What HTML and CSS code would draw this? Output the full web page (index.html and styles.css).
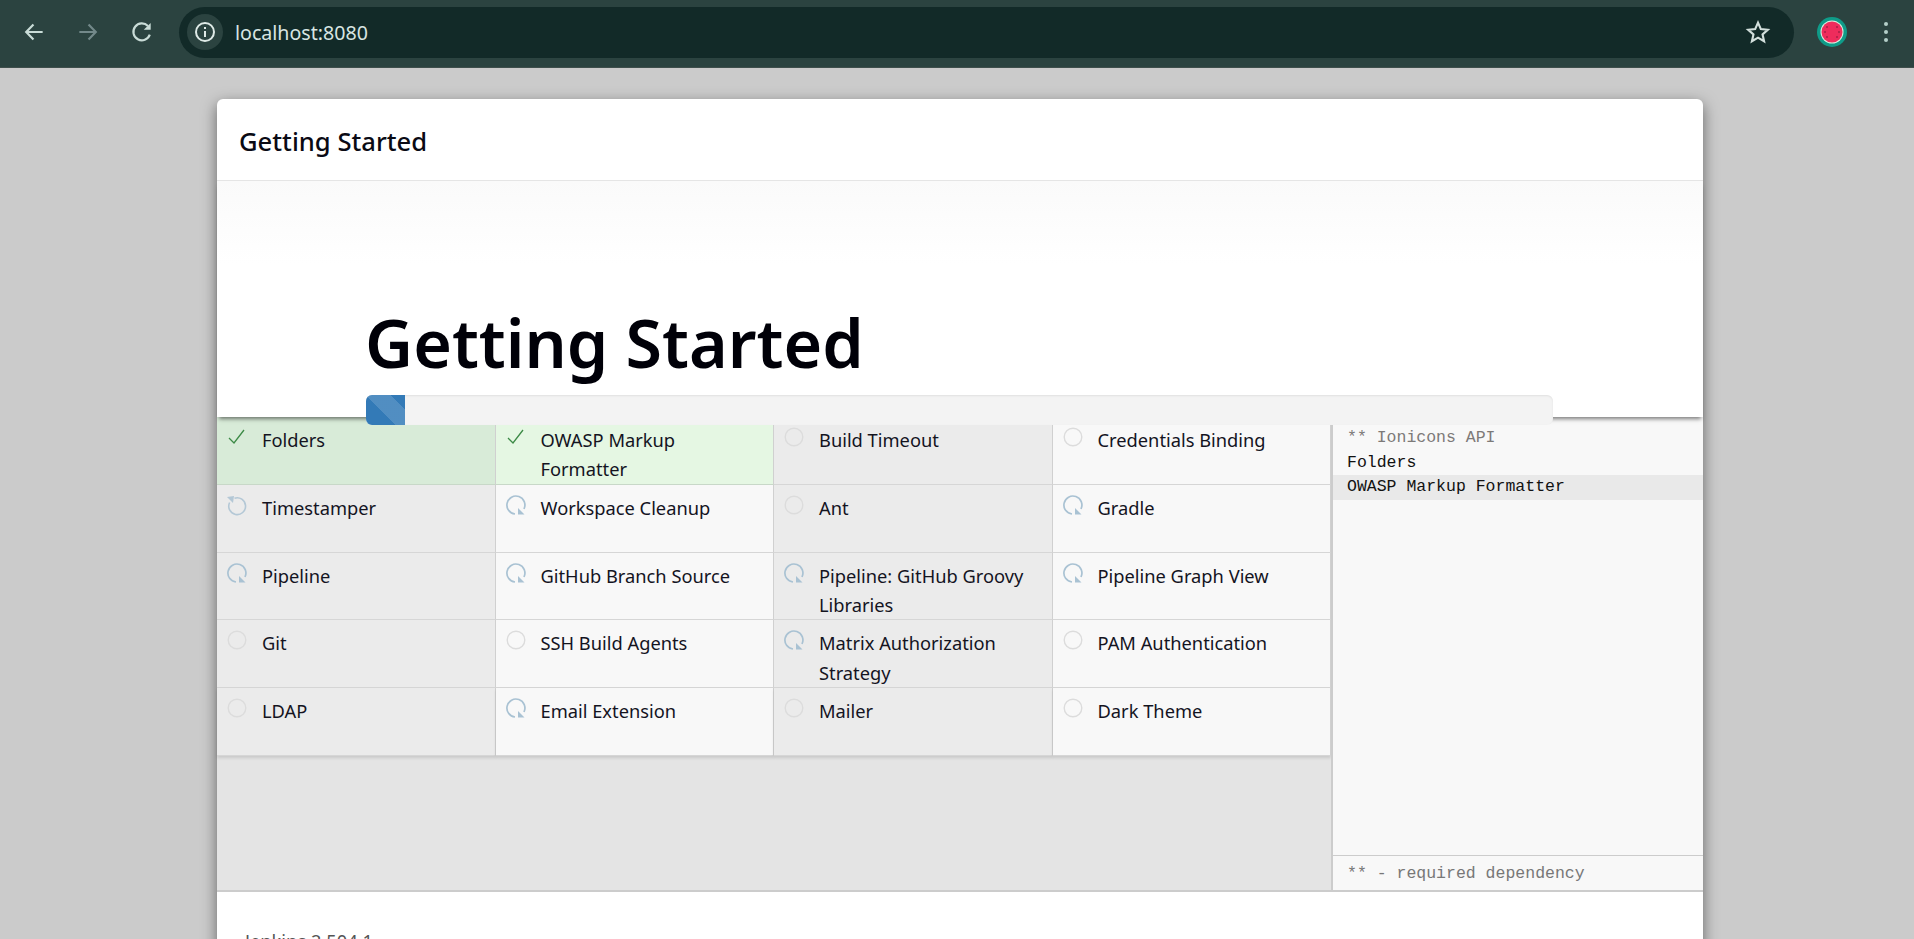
FILE: index.html
```html
<!DOCTYPE html>
<html lang="en">
<head>
    <meta charset="UTF-8">
    <title>Setup Wizard [Jenkins]</title>
    <link rel="stylesheet" href="styles.css">
</head>
<body>
    <svg class="defs" width="0" height="0">
        <symbol id="i-ok" viewBox="0 0 20 20">
            <path d="M2 11 L7 16 L17 3" fill="none" stroke="#3c8a46" stroke-width="1.3"/>
        </symbol>
        <symbol id="i-pending" viewBox="0 0 20 20">
            <circle cx="10" cy="10" r="8.8" fill="none" stroke="#dcdcdc" stroke-width="1.4"/>
        </symbol>
        <symbol id="i-load" viewBox="0 0 20 20">
            <path d="M9 19 A9 9 0 1 1 18 14" fill="none" stroke="#a9c2d3" stroke-width="1.7"/>
            <path d="M12 13 L18.5 19.5 L12 19.5 Z" fill="#a9c2d3"/>
        </symbol>
        <symbol id="i-retry" viewBox="0 0 22 22">
            <path d="M8.5 4.2 A8.4 8.4 0 1 1 3.6 8.5" fill="none" stroke="#b4c8d6" stroke-width="1.6"/>
            <path d="M1 3 L8 2 L7 9 Z" fill="#b4c8d6"/>
        </symbol>
    </svg>

    <header class="toolbar">
        <svg class="tool-icon" viewBox="0 0 24 24"><path d="M20 12H5M11.5 5L4.8 12l6.7 7" fill="none" stroke="#c9dcd7" stroke-width="2"/></svg>
        <svg class="tool-icon" viewBox="0 0 24 24"><path d="M4 12h15M12.5 5l6.7 7-6.7 7" fill="none" stroke="#73898a" stroke-width="2"/></svg>
        <svg class="tool-icon" viewBox="0 0 24 24"><path d="M19.2 14.5A7.8 7.8 0 1 1 17.5 6.5" fill="none" stroke="#c9dcd7" stroke-width="2"/><path d="M20 3.6V10h-6.4z" fill="#c9dcd7"/></svg>
        <div class="omnibox">
            <span class="site-info">
                <svg viewBox="0 0 24 24" width="24" height="24"><circle cx="12" cy="12" r="9" fill="none" stroke="#dfeae7" stroke-width="2"/><path d="M12 11v6M12 7v2" stroke="#dfeae7" stroke-width="2"/></svg>
            </span>
            <span class="url">localhost:8080</span>
            <svg class="star" viewBox="0 0 24 24" width="26" height="26"><path d="M12 3.4l2.6 5.9 6.4.6-4.8 4.3 1.4 6.3-5.6-3.3-5.6 3.3 1.4-6.3L3 9.9l6.4-.6z" fill="none" stroke="#d3dfdc" stroke-width="2"/></svg>
        </div>
        <svg class="avatar" viewBox="0 0 30 30" width="30" height="30">
            <circle cx="15" cy="15" r="15" fill="#0f9b88"/>
            <circle cx="15" cy="15" r="11.5" fill="#d7efe0"/>
            <circle cx="15" cy="15" r="10.5" fill="#ee2c5c"/>
            <g fill="#5c1230"><circle cx="10" cy="10" r=".7"/><circle cx="20" cy="10" r=".7"/><circle cx="8" cy="15" r=".7"/><circle cx="22" cy="15" r=".7"/><circle cx="10" cy="20" r=".7"/><circle cx="20" cy="20" r=".7"/></g>
        </svg>
        <div class="kebab"><i></i><i></i><i></i></div>
    </header>

    <main class="backdrop">
        <div class="modal">
            <div class="modal-header">Getting Started</div>
            <div class="hero">
                <h1>Getting Started</h1>
                <div class="progress"><div class="progress-bar"></div></div>
            </div>
            <div class="install">
                <div class="plugins">
                    <div class="plugin done"><svg class="status"><use href="#i-ok"/></svg><span>Folders</span></div>
                    <div class="plugin done"><svg class="status"><use href="#i-ok"/></svg><span>OWASP Markup Formatter</span></div>
                    <div class="plugin"><svg class="status"><use href="#i-pending"/></svg><span>Build Timeout</span></div>
                    <div class="plugin"><svg class="status"><use href="#i-pending"/></svg><span>Credentials Binding</span></div>

                    <div class="plugin"><svg class="status retry"><use href="#i-retry"/></svg><span>Timestamper</span></div>
                    <div class="plugin"><svg class="status"><use href="#i-load"/></svg><span>Workspace Cleanup</span></div>
                    <div class="plugin"><svg class="status"><use href="#i-pending"/></svg><span>Ant</span></div>
                    <div class="plugin"><svg class="status"><use href="#i-load"/></svg><span>Gradle</span></div>

                    <div class="plugin"><svg class="status"><use href="#i-load"/></svg><span>Pipeline</span></div>
                    <div class="plugin"><svg class="status"><use href="#i-load"/></svg><span>GitHub Branch Source</span></div>
                    <div class="plugin"><svg class="status"><use href="#i-load"/></svg><span>Pipeline: GitHub Groovy Libraries</span></div>
                    <div class="plugin"><svg class="status"><use href="#i-load"/></svg><span>Pipeline Graph View</span></div>

                    <div class="plugin"><svg class="status"><use href="#i-pending"/></svg><span>Git</span></div>
                    <div class="plugin"><svg class="status"><use href="#i-pending"/></svg><span>SSH Build Agents</span></div>
                    <div class="plugin"><svg class="status"><use href="#i-load"/></svg><span>Matrix Authorization Strategy</span></div>
                    <div class="plugin"><svg class="status"><use href="#i-pending"/></svg><span>PAM Authentication</span></div>

                    <div class="plugin"><svg class="status"><use href="#i-pending"/></svg><span>LDAP</span></div>
                    <div class="plugin"><svg class="status"><use href="#i-load"/></svg><span>Email Extension</span></div>
                    <div class="plugin"><svg class="status"><use href="#i-pending"/></svg><span>Mailer</span></div>
                    <div class="plugin"><svg class="status"><use href="#i-pending"/></svg><span>Dark Theme</span></div>
                </div>
                <aside class="log">
                    <div class="log-lines">
                        <div class="log-dep">** Ionicons API</div>
                        <div>Folders</div>
                        <div class="log-current">OWASP Markup Formatter</div>
                    </div>
                    <div class="log-legend">** - required dependency</div>
                </aside>
            </div>
            <div class="modal-footer">Jenkins 2.504.1</div>
        </div>
    </main>
</body>
</html>
```

FILE: styles.css
```css
html, body {
    height: 100%;
    margin: 0;
    overflow: hidden;
}
body {
    font-family: "Noto Sans", "Open Sans", sans-serif;
    color: #14141f;
    background-color: #cbcbcb;
    display: flex;
    flex-direction: column;
}
.defs {
    display: none;
}

/* browser chrome */
.toolbar {
    display: flex;
    align-items: center;
    flex: none;
    height: 64px;
    padding: 0 0 3px 21px;
    background-color: #2b4340;
    border-bottom: 1px solid #3f4f4c;
}
.tool-icon {
    width: 26px;
    height: 26px;
    margin-right: 28px;
}
.omnibox {
    display: flex;
    align-items: center;
    width: 1615px;
    height: 51px;
    margin-left: -4px;
    padding: 0 23px 0 8px;
    box-sizing: border-box;
    border-radius: 26px;
    background-color: #122a28;
}
.site-info {
    display: flex;
    align-items: center;
    justify-content: center;
    width: 36px;
    height: 36px;
    border-radius: 50%;
    background-color: #2b4340;
}
.url {
    flex: 1;
    margin-left: 12px;
    font-size: 19.6px;
    color: #d8e5e2;
}
.avatar {
    margin-left: 23px;
}
.kebab {
    display: flex;
    flex-direction: column;
    gap: 4px;
    margin-left: 37px;
}
.kebab i {
    width: 4px;
    height: 4px;
    border-radius: 50%;
    background-color: #b5cfc9;
}

/* dialog */
.backdrop {
    flex: 1;
    padding: 31px 211px 0 217px;
    min-height: 0;
}
.modal {
    display: flex;
    flex-direction: column;
    background-color: #fff;
    border-radius: 6px 6px 0 0;
    box-shadow: 0 5px 15px rgba(0, 0, 0, .5);
}
.modal-header {
    height: 81px;
    line-height: 85px;
    padding-left: 22px;
    font-size: 25.6px;
    font-weight: 500;
    color: #0a0a14;
    border-bottom: 1px solid #e5e5e5;
}
.hero {
    position: relative;
    z-index: 2;
    height: 236px;
    padding-left: 149px;
    padding-right: 150px;
    display: flex;
    flex-direction: column;
    justify-content: flex-end;
    background: linear-gradient(#fafafa, #fff 35%);
    box-shadow: 0 4px 4px -2px rgba(0, 0, 0, .5);
}
.hero h1 {
    margin: 0 0 13px -1px;
    font-size: 66.3px;
    line-height: 80px;
    font-weight: 600;
    color: #000008;
}
.progress {
    height: 30px;
    margin-bottom: -8px;
    border-radius: 6px;
    overflow: hidden;
    background-color: #f3f3f3;
    box-shadow: inset 0 1px 2px rgba(0, 0, 0, .08);
}
.progress-bar {
    width: 39px;
    height: 100%;
    background-color: #337ab7;
    background-image: linear-gradient(45deg, rgba(255, 255, 255, .15) 25%, transparent 25%, transparent 50%, rgba(255, 255, 255, .15) 50%, rgba(255, 255, 255, .15) 75%, transparent 75%, transparent);
    background-size: 50px 50px;
}

/* plugin grid */
.install {
    display: flex;
    height: 473px;
    background-color: #e4e4e4;
    border-bottom: 2px solid #ccc;
}
.plugins {
    flex: 1;
    display: grid;
    grid-template-columns: repeat(4, 1fr);
    grid-auto-rows: 67.8px;
    align-content: start;
}
.plugin {
    display: flex;
    gap: 15px;
    padding: 10px 12px 0 10px;
    box-sizing: border-box;
    font-size: 18.3px;
    line-height: 29.3px;
    background-color: #f8f8f8;
    border-right: 1px solid #d0d0d0;
    border-bottom: 1px solid #d6d6d6;
}
.plugin span {
    margin-top: -2px;
}
.plugin:nth-child(odd) {
    background-color: #ebebeb;
}
.plugin.done {
    background-color: #e5f7e3;
    border-bottom-color: #c8d8c8;
}
.plugin.done:nth-child(odd) {
    background-color: #d8ebd8;
}
.plugin:nth-child(n+17) {
    box-shadow: 0 2px 3px rgba(0, 0, 0, .12);
}
.status {
    flex: none;
    width: 20px;
    height: 20px;
    overflow: visible;
}
.status.retry {
    width: 22px;
    height: 22px;
    margin: -1px -1px 0 -1px;
}

/* install log */
.log {
    flex: none;
    display: flex;
    flex-direction: column;
    width: 370px;
    background-color: #f8f8f8;
    border-left: 2px solid #ccc;
    font-family: "Liberation Mono", monospace;
    font-size: 16.5px;
}
.log-lines {
    flex: 1;
    padding-top: 9px;
    line-height: 24.5px;
    color: #111;
}
.log-lines div {
    padding-left: 14px;
}
.log-dep {
    color: #7d7a78;
}
.log-lines .log-current {
    background-color: #e9e9e9;
}
.log-legend {
    height: 34px;
    line-height: 36px;
    padding-left: 14px;
    color: #777;
    border-top: 1px solid #ccc;
}
.modal-footer {
    height: 120px;
    padding: 36px 0 0 28px;
    font-size: 18.3px;
    color: #555;
}
```
